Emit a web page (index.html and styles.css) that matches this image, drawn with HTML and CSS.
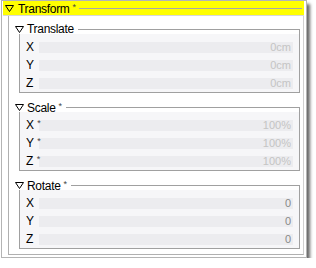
FILE: index.html
```html
<!DOCTYPE html>
<html lang="en">
<head>
    <meta charset="UTF-8">
    <title>Transform</title>
    <link rel="stylesheet" href="styles.css">
</head>
<body>
    <div class="panel">
        <div class="head">
            <svg class="tri" width="9" height="7" viewBox="0 0 9 7"><polygon points="0.5,0.5 8.5,0.5 4.5,6.5" fill="none" stroke="#000"/></svg>
            <span class="htext">Transform <span class="star">*</span></span>
            <span class="hrule"></span>
        </div>
        <div class="content">
            <div class="group">
                <div class="gtitle">
                    <svg class="tri" width="9" height="7" viewBox="0 0 9 7"><polygon points="0.5,0.5 8.5,0.5 4.5,6.5" fill="none" stroke="#000"/></svg>
                    <span class="gtext">Translate</span>
                    <span class="grule"></span>
                </div>
                <div class="gbox">
                    <div class="row"><span class="lbl">X</span><span class="field light">0cm</span></div>
                    <div class="row"><span class="lbl">Y</span><span class="field light">0cm</span></div>
                    <div class="row"><span class="lbl">Z</span><span class="field light">0cm</span></div>
                </div>
            </div>
            <div class="group">
                <div class="gtitle">
                    <svg class="tri" width="9" height="7" viewBox="0 0 9 7"><polygon points="0.5,0.5 8.5,0.5 4.5,6.5" fill="none" stroke="#000"/></svg>
                    <span class="gtext">Scale <span class="star">*</span></span>
                    <span class="grule"></span>
                </div>
                <div class="gbox">
                    <div class="row"><span class="lbl">X <span class="star">*</span></span><span class="field light">100%</span></div>
                    <div class="row"><span class="lbl">Y <span class="star">*</span></span><span class="field light">100%</span></div>
                    <div class="row"><span class="lbl">Z <span class="star">*</span></span><span class="field light">100%</span></div>
                </div>
            </div>
            <div class="group">
                <div class="gtitle">
                    <svg class="tri" width="9" height="7" viewBox="0 0 9 7"><polygon points="0.5,0.5 8.5,0.5 4.5,6.5" fill="none" stroke="#000"/></svg>
                    <span class="gtext">Rotate <span class="star">*</span></span>
                    <span class="grule"></span>
                </div>
                <div class="gbox">
                    <div class="row"><span class="lbl">X</span><span class="field">0</span></div>
                    <div class="row"><span class="lbl">Y</span><span class="field">0</span></div>
                    <div class="row"><span class="lbl">Z</span><span class="field">0</span></div>
                </div>
            </div>
        </div>
    </div>
</body>
</html>
```

FILE: styles.css
```css
*{
    margin: 0;
    padding: 0;
    box-sizing: border-box;
}
body{
    background: #fff;
    font-family: "Liberation Sans", Arial, sans-serif;
    font-size: 12px;
    color: #000;
}
.panel{
    width: 306px;
    height: 258px;
    margin: 0 0 0 1px;
    border: 1px solid #b4b4b4;
    background: #fff;
    box-shadow: 3px 4px 3px #6a6a6a;
    padding: 0 2px 2px 1px;
    display: flex;
    flex-direction: column;
}
.head{
    height: 15px;
    background: #ffff00;
    display: flex;
    align-items: center;
    padding-left: 2px;
    border-bottom: 1px solid #d8d8d8;
}
.tri{
    flex: none;
    display: block;
}
.htext{
    margin-left: 4px;
    line-height: 14px;
    font-size: 12px;
    letter-spacing: -0.3px;
}
.star{
    font-size: 9px;
    color: #444;
    vertical-align: 3px;
    letter-spacing: 0;
}
.hrule{
    flex: 1;
    height: 1px;
    background: #a8a8a8;
    margin: 1px 2px 0 3px;
}
.content{
    flex: 1;
    margin-left: 5px;
    border-left: 1px solid #b0b0b0;
    border-bottom: 1px solid #b0b0b0;
    border-right: 1px solid #d0d0d0;
    padding: 8px 3px 4px 10px;
    display: flex;
    flex-direction: column;
    gap: 9px;
}
.gtitle{
    height: 10px;
    display: flex;
    align-items: center;
    margin-left: -4px;
}
.gtext{
    margin-left: 3px;
    line-height: 12px;
    letter-spacing: -0.3px;
}
.grule{
    flex: 1;
    align-self: stretch;
    margin: 5px 0 0 4px;
    border-top: 1px solid #a0a0a0;
    border-right: 1px solid #a0a0a0;
}
.gbox{
    border: 1px solid #a0a0a0;
    border-top: none;
    background: #f6f6f8;
    padding: 4px 6px 0 6px;
}
.row{
    height: 18px;
    display: flex;
    align-items: center;
}
.lbl{
    width: 13px;
    flex: none;
    white-space: nowrap;
    font-size: 12px;
    position: relative;
    z-index: 1;
}
.field{
    flex: 1;
    height: 11px;
    background: #ececef;
    text-align: right;
    font-size: 11px;
    line-height: 11px;
    color: #888;
    padding-right: 2px;
}
.field.light{
    color: #c4c4c4;
}
```
